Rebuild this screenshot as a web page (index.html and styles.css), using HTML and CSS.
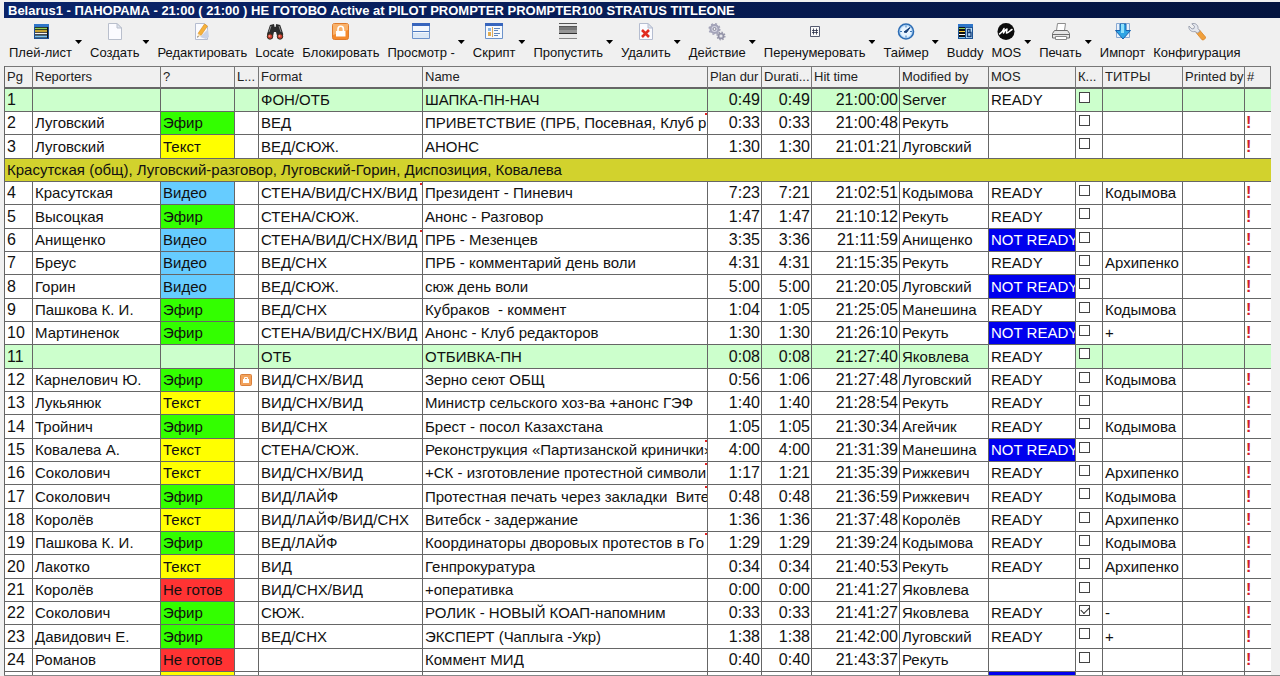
FILE: index.html
```
<!DOCTYPE html>
<html lang="ru">
<head>
    <meta charset="UTF-8">
    <meta name="viewport" content="width=device-width, initial-scale=1.0">
    <title>Belarus1 - ПАНОРАМА</title>
    <link rel="stylesheet" href="styles.css">
</head>
<body>
    <h1 class="title-bar">Belarus1 - ПАНОРАМА - 21:00 ( 21:00 ) НЕ ГОТОВО Active at PILOT PROMPTER PROMPTER100 STRATUS TITLEONE</h1>

    <div class="toolbar" role="toolbar">
        <div class="tool">
            <button class="tool-main">
                <svg class="icon" viewBox="0 0 18 18"><path fill="#1c4f94" d="M2 1h15v15H2z"/><path fill="#2e75c8" d="M2 1h15v3H2z"/><path fill="#111" d="M3 4h13v11H3z"/><path stroke="#8fd05a" stroke-width="1.500" d="M3 5.500h12"/><path stroke="#ffd23c" stroke-width="1.500" d="M3 8h12"/><path stroke="#f4f4f4" stroke-width="1.500" d="M3 10.500h12"/><path stroke="#7cc3f2" stroke-width="2" d="M3 13.500h12"/></svg>
                <span>Плей-лист</span>
            </button>
            <button class="tool-arrow" aria-label="Плей-лист: меню"></button>
        </div>
        <div class="tool">
            <button class="tool-main">
                <svg class="icon" viewBox="0 0 18 18"><path fill="#fbfbff" stroke="#b9bfcc" d="M2.500.5h8.500l4.500 4.500v11.500h-13z"/><path fill="#dfe4ee" stroke="#b9bfcc" d="M11 .5V5h4.500z"/></svg>
                <span>Создать</span>
            </button>
            <button class="tool-arrow" aria-label="Создать: меню"></button>
        </div>
        <div class="tool">
            <button class="tool-main">
                <svg class="icon" viewBox="0 0 18 18"><path fill="#fafbff" stroke="#b5bdd0" d="M2.500.5h9l3 3v13h-12z"/><path fill="#c9d2e6" d="M7 14l8-8 1 8-3 2z"/><path fill="#f5b13a" stroke="#d98a1c" stroke-width=".6" d="M11.500 1l3 2-6.500 9.500-3-2z"/><path fill="#f6dcae" d="M5 10.500l3 2-3.500 2z"/><path fill="#444" d="M4.700 13l1 .8-1.400.9z"/></svg>
                <span>Редактировать</span>
            </button>
        </div>
        <div class="tool">
            <button class="tool-main">
                <svg class="icon" viewBox="0 0 18 18"><path fill="#2b2b2b" d="M4 2l4-1 .6 3h1l.6-3 4 1 3 9-.5 4-5 .5L10 9H8l-1.500 6.500-5-.5L1 11z"/><path stroke="#888" d="M5 3L3 9M13 3l2 6"/><circle cx="4" cy="13.500" r="2.700" fill="#d33b2c" stroke="#332"/><circle cx="14" cy="13.500" r="2.700" fill="#d33b2c" stroke="#332"/><circle cx="3.500" cy="13" r="1" fill="#f39a8c"/><circle cx="13.500" cy="13" r="1" fill="#f39a8c"/></svg>
                <span>Locate</span>
            </button>
        </div>
        <div class="tool">
            <button class="tool-main">
                <svg class="icon" viewBox="0 0 18 18"><rect x=".5" y=".5" width="16" height="16" rx="2" fill="#f58a2c" stroke="#df7a2a"/><path fill="#f9b26b" d="M1 1h15v6L1 12z"/><path fill="none" stroke="#fff" stroke-width="1.600" d="M6 8V6a2.700 2.700 0 0 1 5.400 0v2"/><path fill="#fff" d="M4 8h9.500v5.500H4z"/></svg>
                <span>Блокировать</span>
            </button>
        </div>
        <div class="tool">
            <button class="tool-main">
                <svg class="icon" viewBox="0 0 18 18"><path fill="#f4f8fd" stroke="#6c93cb" d="M.5.5h17v15H.5z"/><path fill="#3765bd" d="M0 0h18v3H0z"/><path fill="#dbe8f6" d="M1 10h16v5H1z"/><path stroke="#4f7bc0" d="M1 8.500h16"/></svg>
                <span>Просмотр -</span>
            </button>
            <button class="tool-arrow" aria-label="Просмотр: меню"></button>
        </div>
        <div class="tool">
            <button class="tool-main">
                <svg class="icon" viewBox="0 0 18 18"><path fill="#f6f9fd" stroke="#6c93cb" d="M.5.5h17v15H.5z"/><path fill="#3765bd" d="M0 0h18v3H0z"/><path fill="#8fb7e2" d="M3 5h3v3H3z"/><path fill="#e3ad50" d="M3 9h3v4H3z"/><path stroke="#d9a860" d="M7.500 4v10"/><path stroke="#5f87bd" d="M9 5.500h6M9 7.500h4M9 10.500h6M9 12.500h4"/></svg>
                <span>Скрипт</span>
            </button>
            <button class="tool-arrow" aria-label="Скрипт: меню"></button>
        </div>
        <div class="tool">
            <button class="tool-main">
                <svg class="icon" viewBox="0 0 18 18"><path fill="#e8e8e8" d="M0 0h18v16H0z"/><path fill="#777" d="M0 4h18v6H0z"/><path fill="#969696" d="M0 7h18v3H0z"/><path stroke="#555" d="M0 .5h18M0 3.500h18"/><path stroke="#333" d="M0 10.500h18"/><path stroke="#888" d="M0 15.500h18"/></svg>
                <span>Пропустить</span>
            </button>
            <button class="tool-arrow" aria-label="Пропустить: меню"></button>
        </div>
        <div class="tool">
            <button class="tool-main">
                <svg class="icon" viewBox="0 0 18 18"><path fill="#fafbff" stroke="#b5bdd0" d="M2.500.5h8.500l4.500 4.500v11.500h-13z"/><path fill="#dfe4ee" stroke="#b5bdd0" d="M11 .5V5h4.500z"/><path stroke="#e02b20" stroke-width="2.600" d="M5 7l7 7M12 7l-7 7"/></svg>
                <span>Удалить</span>
            </button>
            <button class="tool-arrow" aria-label="Удалить: меню"></button>
        </div>
        <div class="tool">
            <button class="tool-main">
                <svg class="icon" viewBox="0 0 18 18"><circle cx="6.500" cy="6" r="4" fill="#d3d3e0" stroke="#a3a3b8" stroke-width="2"/><circle cx="6.500" cy="6" r="5.300" fill="none" stroke="#a3a3b8" stroke-width="1.500" stroke-dasharray="2 2.160"/><circle cx="6.500" cy="6" r="1.500" fill="#f0f0f0" stroke="#88889c"/><circle cx="13" cy="13" r="2.600" fill="#c6c6d4" stroke="#9292a6" stroke-width="1.500"/><circle cx="13" cy="13" r="3.900" fill="none" stroke="#9292a6" stroke-width="1.200" stroke-dasharray="1.500 1.560"/><circle cx="13" cy="13" r="1" fill="#f0f0f0"/></svg>
                <span>Действие</span>
            </button>
            <button class="tool-arrow" aria-label="Действие: меню"></button>
        </div>
        <div class="tool">
            <button class="tool-main">
                <svg class="icon" viewBox="0 0 18 18"><path fill="#fafafa" stroke="#555b70" d="M4.500 3.500h9v10h-9z"/><path fill="none" stroke="#2a2f48" stroke-width=".8" d="M7.500 5.500v6M10.500 5.500v6M6 7.500h6M6 9.500h6"/></svg>
                <span>Перенумеровать</span>
            </button>
            <button class="tool-arrow" aria-label="Перенумеровать: меню"></button>
        </div>
        <div class="tool">
            <button class="tool-main">
                <svg class="icon" viewBox="0 0 18 18"><circle cx="9" cy="8.500" r="7.500" fill="#b5d8f8" stroke="#2c6cb4" stroke-width="1.600"/><circle cx="9" cy="8.500" r="5.500" fill="#e6f3ff"/><path stroke="#3c78b8" d="M9 2.500v2M9 12.500v2M3 8.500h2M13 8.500h2"/><path fill="#153f78" stroke="#153f78" d="M13 4.500L9.500 9.500l-2.500-.5z"/></svg>
                <span>Таймер</span>
            </button>
            <button class="tool-arrow" aria-label="Таймер: меню"></button>
        </div>
        <div class="tool">
            <button class="tool-main">
                <svg class="icon" viewBox="0 0 18 18"><path fill="#1f5596" d="M2 1h15v15H2z"/><path fill="#2e75c8" d="M2 1h15v3H2z"/><path fill="#111" d="M3 4h6v11H3z"/><path stroke="#8fd05a" d="M3 5.500h6"/><path stroke="#ffd23c" d="M3 8.500h6"/><path stroke="#fff" d="M3 11.500h6"/><path stroke="#7cc3f2" d="M3 14.500h6"/><path fill="#b7dbf6" d="M10 5h6v10h-6z"/><path fill="none" stroke="#173f78" stroke-width="1.300" d="M11.500 6v8M11.500 6.500h2.500v3h-2.500M12 9.500h3v4h-3.500"/></svg>
                <span>Buddy</span>
            </button>
        </div>
        <div class="tool">
            <button class="tool-main">
                <svg class="icon" viewBox="0 0 18 18"><circle cx="9" cy="8.500" r="8.500" fill="#0b0b0b"/><path fill="none" stroke="#fff" stroke-width="1.500" stroke-linecap="round" stroke-linejoin="round" d="M2.500 11c2-1 3.500-3 4.500-5.500L6.500 10c1-1.500 2-3.500 3.500-4L9.500 10c1 .8 3-2 5.500-3.500"/></svg>
                <span>MOS</span>
            </button>
            <button class="tool-arrow" aria-label="MOS: меню"></button>
        </div>
        <div class="tool">
            <button class="tool-main">
                <svg class="icon" viewBox="0 0 18 18"><path fill="#fff" stroke="#8d8d8d" d="M5.500.5h8l-1 7h-8z"/><path fill="#e6e6e6" stroke="#6d6d6d" d="M2.500 7.500h13l2 3v4.500H.5v-4.500z"/><path stroke="#6d6d6d" d="M1 11.500h16"/><path fill="#fff" stroke="#888" d="M3.500 13.500h11v3h-11z"/></svg>
                <span>Печать</span>
            </button>
            <button class="tool-arrow" aria-label="Печать: меню"></button>
        </div>
        <div class="tool">
            <button class="tool-main">
                <svg class="icon" viewBox="0 0 18 18"><path fill="#e8f1fb" stroke="#88a9d2" d="M2.500.5h13v14h-13z"/><path fill="#2da4e4" stroke="#1560ae" d="M6 1v6.500H1.500L9 16l7.500-8.500H12V1z"/><path fill="#8fe0fa" d="M7 1h3v9H7z"/></svg>
                <span>Импорт</span>
            </button>
        </div>
        <div class="tool">
            <button class="tool-main">
                <svg class="icon" viewBox="0 0 18 18"><path fill="#f0a03c" stroke="#d8842a" stroke-width=".8" d="M8 9.500L11.500 7l6 7c.5 1.500-2 3.500-3.500 2.800z"/><path fill="#e4e7ee" stroke="#969cab" stroke-width=".9" d="M1 3l3 3 2-.5.5-2.200L3.800.8C7-.5 10.500 2 10 5.500L12 8l-2.500 2L7 8.500C3.500 9.500.2 6.500 1 3z"/></svg>
                <span>Конфигурация</span>
            </button>
        </div>
    </div>

    <div class="grid-wrap">
        <table class="rundown">
            <colgroup>
                <col class="w-pg"><col class="w-rep"><col class="w-state"><col class="w-lock"><col class="w-format"><col>
                <col class="w-plan"><col class="w-dur"><col class="w-hit"><col class="w-mod"><col class="w-mos"><col class="w-check">
                <col class="w-titles"><col class="w-printed"><col class="w-mark">
            </colgroup>
            <thead>
                <tr>
                    <th>Pg</th><th>Reporters</th><th>?</th><th>L...</th><th>Format</th><th>Name</th>
                    <th>Plan dur</th><th>Durati...</th><th>Hit time</th><th>Modified by</th><th>MOS</th>
                    <th>К...</th><th>ТИТРЫ</th><th>Printed by</th><th>#</th>
                </tr>
            </thead>
            <tbody id="rundown-body"></tbody>
        </table>
    </div>

    <script src="script.js"></script>
</body>
</html>
```
FILE: styles.css
```
* {
    box-sizing: border-box;
}

body {
    margin: 0;
    padding: 2px 0 0 4px;
    height: 100vh;
    display: flex;
    flex-direction: column;
    overflow: hidden;
    background: #f0f0f0;
    color: #111;
    font-family: "Liberation Sans", Arial, sans-serif;
}

button {
    border: none;
    background: none;
    padding: 0;
    color: inherit;
    font-family: inherit;
}

.title-bar {
    flex: none;
    margin: 0;
    padding-left: 4px;
    height: 16px;
    line-height: 17px;
    overflow: hidden;
    white-space: nowrap;
    font-size: 13px;
    color: #fff;
    background: linear-gradient(to right, #0a246a, #04143f);
}

/* Панель инструментов */
.toolbar {
    flex: none;
    display: flex;
    gap: 8px;
    height: 48px;
    padding: 5px 0 0 5px;
    overflow: hidden;
}

.tool {
    display: flex;
    align-items: flex-start;
    gap: 3px;
}

.tool-main {
    display: flex;
    flex-direction: column;
    align-items: center;
    gap: 4px;
    font-size: 13px;
    line-height: 16px;
    white-space: nowrap;
}

.icon {
    width: 18px;
    height: 18px;
}

.tool-arrow {
    width: 7px;
    height: 4px;
    margin-top: 17px;
    background: #000;
    clip-path: polygon(0 0, 100% 0, 50% 100%);
}

/* Таблица */
.grid-wrap {
    flex: 1;
    min-height: 0;
    overflow: hidden;
    padding-right: 9px;
    border-bottom: 1px solid #888;
}

.rundown {
    width: 100%;
    table-layout: fixed;
    border-collapse: separate;
    border-spacing: 0;
    border-left: 1px solid #666;
}

.w-pg { width: 28px; }
.w-rep { width: 128px; }
.w-state { width: 74px; }
.w-lock { width: 24px; }
.w-format { width: 164px; }
.w-plan { width: 54px; }
.w-dur { width: 50px; }
.w-hit { width: 88px; }
.w-mod { width: 89px; }
.w-mos { width: 87px; }
.w-check { width: 27px; }
.w-titles { width: 80px; }
.w-printed { width: 62px; }
.w-mark { width: 26px; }

.rundown th {
    height: 23px;
    padding: 0 0 0 2px;
    border-top: 1px solid #777;
    border-right: 1px solid #777;
    border-bottom: 2px solid #666;
    background: #f0f0f0;
    color: #222;
    font-size: 13px;
    font-weight: normal;
    line-height: 20px;
    text-align: left;
    white-space: nowrap;
    overflow: hidden;
}

.rundown td {
    position: relative;
    height: 23px;
    padding: 0 0 0 2px;
    border-right: 1px solid #666;
    border-bottom: 1px solid #666;
    background: #fff;
    font-size: 15px;
    line-height: 22px;
    white-space: pre;
    overflow: hidden;
}

.rundown tr:nth-child(3n) td {
    height: 24px;
}

.rundown td:last-child {
    border-right: none;
}

.rundown .time {
    padding: 0 1px 0 0;
    font-size: 16px;
    text-align: right;
}

.rundown .pg {
    font-size: 16px;
}

.rundown .break td {
    background: #ccffcc;
}

.rundown .break .mos {
    background: #fff;
}

.rundown .note td {
    background: #d2d22d;
}

.rundown .live { background: #33ff00; }
.rundown .text { background: #ffff00; }
.rundown .video { background: #66ccff; }
.rundown .not-done { background: #ff3333; }

.rundown .mos.not-ready {
    background: #0000ee;
    color: #fff;
}

.rundown .mark {
    color: #d0202a;
    font-size: 16px;
    font-weight: bold;
    padding-left: 1px;
}

/* Красная метка на обрезанном тексте */
.rundown .more::after {
    content: "";
    position: absolute;
    top: 1px;
    right: 0;
    width: 2px;
    height: 2px;
    background: #e02020;
}

.rundown .check {
    padding: 3px 0 0 3px;
    line-height: 0;
    vertical-align: top;
}

.check input {
    appearance: none;
    display: block;
    width: 11px;
    height: 11px;
    margin: 0;
    border: 1px solid #444;
    background: #fff;
}

.check input:checked::before {
    content: "";
    display: block;
    width: 7px;
    height: 4px;
    margin: 1px;
    border-left: 1px solid #222;
    border-bottom: 1px solid #222;
    transform: rotate(-45deg);
}

.lock-icon {
    display: block;
    width: 12px;
    height: 12px;
    margin-left: 3px;
}
```
FILE: script.js
```
// pg, reporter, state, format, name, plan, duration, hit, modified, mos, titles
const rows = [
    ['1', '', '', 'ФОН/ОТБ', 'ШАПКА-ПН-НАЧ', '0:49', '0:49', '21:00:00', 'Server', 'READY', ''],
    ['2', 'Луговский', 'Эфир', 'ВЕД', 'ПРИВЕТСТВИЕ (ПРБ, Посевная, Клуб р', '0:33', '0:33', '21:00:48', 'Рекуть', '', ''],
    ['3', 'Луговский', 'Текст', 'ВЕД/СЮЖ.', 'АНОНС', '1:30', '1:30', '21:01:21', 'Луговский', '', ''],
    'Красутская (общ), Луговский-разговор, Луговский-Горин, Диспозиция, Ковалева',
    ['4', 'Красутская', 'Видео', 'СТЕНА/ВИД/СНХ/ВИД', 'Президент - Пиневич', '7:23', '7:21', '21:02:51', 'Кодымова', 'READY', 'Кодымова'],
    ['5', 'Высоцкая', 'Эфир', 'СТЕНА/СЮЖ.', 'Анонс - Разговор', '1:47', '1:47', '21:10:12', 'Рекуть', 'READY', ''],
    ['6', 'Анищенко', 'Видео', 'СТЕНА/ВИД/СНХ/ВИД', 'ПРБ - Мезенцев', '3:35', '3:36', '21:11:59', 'Анищенко', 'NOT READY', ''],
    ['7', 'Бреус', 'Видео', 'ВЕД/СНХ', 'ПРБ - комментарий день воли', '4:31', '4:31', '21:15:35', 'Рекуть', 'READY', 'Архипенко'],
    ['8', 'Горин', 'Видео', 'ВЕД/СЮЖ.', 'сюж день воли', '5:00', '5:00', '21:20:05', 'Луговский', 'NOT READY', ''],
    ['9', 'Пашкова К. И.', 'Эфир', 'ВЕД/СНХ', 'Кубраков  - коммент', '1:04', '1:05', '21:25:05', 'Манешина', 'READY', 'Кодымова'],
    ['10', 'Мартиненок', 'Эфир', 'СТЕНА/ВИД/СНХ/ВИД', 'Анонс - Клуб редакторов', '1:30', '1:30', '21:26:10', 'Рекуть', 'NOT READY', '+'],
    ['11', '', '', 'ОТБ', 'ОТБИВКА-ПН', '0:08', '0:08', '21:27:40', 'Яковлева', 'READY', ''],
    ['12', 'Карнелович Ю.', 'Эфир', 'ВИД/СНХ/ВИД', 'Зерно сеют ОБЩ', '0:56', '1:06', '21:27:48', 'Луговский', 'READY', 'Кодымова'],
    ['13', 'Лукьянюк', 'Текст', 'ВИД/СНХ/ВИД', 'Министр сельского хоз-ва +анонс ГЭФ', '1:40', '1:40', '21:28:54', 'Рекуть', 'READY', ''],
    ['14', 'Тройнич', 'Эфир', 'ВИД/СНХ', 'Брест - посол Казахстана', '1:05', '1:05', '21:30:34', 'Агейчик', 'READY', 'Кодымова'],
    ['15', 'Ковалева А.', 'Текст', 'СТЕНА/СЮЖ.', 'Реконструкция «Партизанской кринички»', '4:00', '4:00', '21:31:39', 'Манешина', 'NOT READY', ''],
    ['16', 'Соколович', 'Текст', 'ВИД/СНХ/ВИД', '+СК - изготовление протестной символи', '1:17', '1:21', '21:35:39', 'Рижкевич', 'READY', 'Архипенко'],
    ['17', 'Соколович', 'Эфир', 'ВИД/ЛАЙФ', 'Протестная печать через закладки  Вите', '0:48', '0:48', '21:36:59', 'Рижкевич', 'READY', 'Кодымова'],
    ['18', 'Королёв', 'Текст', 'ВИД/ЛАЙФ/ВИД/СНХ', 'Витебск - задержание', '1:36', '1:36', '21:37:48', 'Королёв', 'READY', 'Архипенко'],
    ['19', 'Пашкова К. И.', 'Эфир', 'ВЕД/ЛАЙФ', 'Координаторы дворовых протестов в Го', '1:29', '1:29', '21:39:24', 'Кодымова', 'READY', 'Кодымова'],
    ['20', 'Лакотко', 'Текст', 'ВИД', 'Генпрокуратура', '0:34', '0:34', '21:40:53', 'Рекуть', 'READY', 'Архипенко'],
    ['21', 'Королёв', 'Не готов', 'ВИД/СНХ/ВИД', '+оперативка', '0:00', '0:00', '21:41:27', 'Яковлева', '', ''],
    ['22', 'Соколович', 'Эфир', 'СЮЖ.', 'РОЛИК - НОВЫЙ КОАП-напомним', '0:33', '0:33', '21:41:27', 'Яковлева', 'READY', '-'],
    ['23', 'Давидович Е.', 'Эфир', 'ВЕД/СНХ', 'ЭКСПЕРТ (Чаплыга -Укр)', '1:38', '1:38', '21:42:00', 'Луговский', 'READY', '+'],
    ['24', 'Романов', 'Не готов', '', 'Коммент МИД', '0:40', '0:40', '21:43:37', 'Рекуть', '', ''],
    ['25', '', 'Текст', '', '', '', '', '', '', 'NOT READY', '']
];

const stateClass = { 'Эфир': 'live', 'Текст': 'text', 'Видео': 'video', 'Не готов': 'not-done' };
const locked = ['12'];
const checked = ['22'];

// строки с длинным текстом: красная метка в углу ячейки
const longFormat = ['4', '6'];
const longName = ['2', '15', '16', '17', '19'];

const lockIcon = '<svg class="lock-icon" viewBox="0 0 12 12"><rect x=".5" y=".5" width="11" height="11" rx="1" fill="#f2a25c" stroke="#d9803c"/><path fill="#fff" d="M3 5h6v4H3z"/><path fill="none" stroke="#fff" d="M4.500 5V3.500h3V5"/></svg>';

const body = document.getElementById('rundown-body');

rows.forEach(function(row) {
    const tr = document.createElement('tr');
    if (typeof row === 'string') {
        tr.className = 'note';
        tr.innerHTML = `<td colspan="15">${row}</td>`;
        body.appendChild(tr);
        return;
    }

    const [pg, reporter, state, format, name, plan, duration, hit, modified, mos, titles] = row;
    const isBreak = pg === '1' || pg === '11';
    if (isBreak) tr.className = 'break';

    tr.innerHTML = `
        <td class="pg">${pg}</td>
        <td>${reporter}</td>
        <td class="${stateClass[state] || ''}">${state}</td>
        <td>${locked.includes(pg) ? lockIcon : ''}</td>
        <td class="${longFormat.includes(pg) ? 'more' : ''}">${format}</td>
        <td class="${longName.includes(pg) ? 'more' : ''}">${name}</td>
        <td class="time">${plan}</td>
        <td class="time">${duration}</td>
        <td class="time">${hit}</td>
        <td>${modified}</td>
        <td class="mos${mos === 'NOT READY' ? ' not-ready' : ''}">${mos}</td>
        <td class="check"><input type="checkbox" aria-label="К ${pg}"${checked.includes(pg) ? ' checked' : ''}></td>
        <td>${titles}</td>
        <td></td>
        <td class="mark">${isBreak ? '' : '!'}</td>`;
    body.appendChild(tr);
});
```
